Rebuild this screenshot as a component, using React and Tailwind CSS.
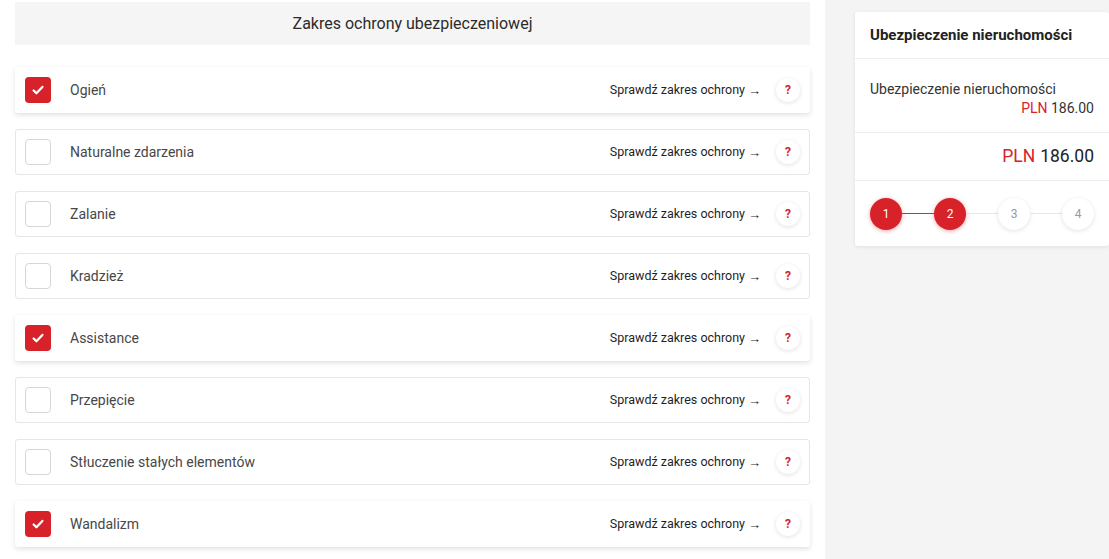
import React from 'react';

const items = [
    { label: 'Ogień', checked: true },
    { label: 'Naturalne zdarzenia', checked: false },
    { label: 'Zalanie', checked: false },
    { label: 'Kradzież', checked: false },
    { label: 'Assistance', checked: true },
    { label: 'Przepięcie', checked: false },
    { label: 'Stłuczenie stałych elementów', checked: false },
    { label: 'Wandalizm', checked: true },
];

function Check() {
    return (
        <svg viewBox="0 0 16 16" className="w-[14px] h-[14px]" fill="none">
            <path d="M3 8.5l3.2 3.2L13 4.5" stroke="white" strokeWidth="2.6" strokeLinecap="round" strokeLinejoin="round" />
        </svg>
    );
}

function Row({ label, checked }) {
    return (
        <div
            className={
                'h-[46px] flex items-center bg-white rounded-[3px] ' +
                (checked
                    ? 'pl-[10px] pr-[10px] shadow-[0_2px_5px_rgba(0,0,0,0.12)]'
                    : 'pl-[9px] pr-[9px] border border-[#e6e6e6]')
            }
        >
            <div
                className={
                    'w-[26px] h-[26px] rounded-[4px] flex items-center justify-center shrink-0 ' +
                    (checked ? 'bg-[#d7222a]' : 'border border-[#d6d6d6] bg-white')
                }
            >
                {checked && <Check />}
            </div>
            <span className="ml-[19px] text-[14px] text-[#474747]">{label}</span>
            <span className="ml-auto text-[12.5px] text-[#1f1f1f] flex items-center">
                Sprawdź zakres ochrony
                <span className="ml-[3px] text-[13px] leading-none">→</span>
            </span>
            <div className="ml-[15px] w-[24px] h-[24px] rounded-full bg-white shadow-[0_1px_4px_rgba(0,0,0,0.12)] flex items-center justify-center text-[12px] font-bold text-[#d7222a]">
                ?
            </div>
        </div>
    );
}

function Step({ n, active }) {
    return (
        <div
            className={
                'w-[32px] h-[32px] rounded-full flex items-center justify-center text-[12px] shrink-0 ' +
                (active
                    ? 'bg-[#d7222a] text-white shadow-[0_1px_4px_rgba(215,34,42,0.4)]'
                    : 'bg-white text-[#9a9a9a] shadow-[0_1px_4px_rgba(0,0,0,0.12)]')
            }
        >
            {n}
        </div>
    );
}

export default function App() {
    return (
        <div className="flex w-[1109px] h-[559px] overflow-hidden bg-[#f5f4f4]" style={{ fontFamily: 'Roboto, "Liberation Sans", sans-serif' }}>
            <div className="w-[825px] bg-white px-[15px] pt-[2px] shrink-0">
                <div className="h-[43px] bg-[#f6f5f5] flex items-center justify-center text-[16px] text-[#2b2b2b]">
                    Zakres ochrony ubezpieczeniowej
                </div>
                <div className="mt-[22px] flex flex-col gap-[16px]">
                    {items.map((it) => (
                        <Row key={it.label} {...it} />
                    ))}
                </div>
            </div>
            <div className="flex-1 pl-[30px] pt-[12px]">
                <div className="bg-white rounded-[3px] shadow-[0_1px_4px_rgba(0,0,0,0.08)]">
                    <div className="h-[47px] flex items-center px-[15px] border-b border-[#ececec] text-[15px] font-bold text-[#222]">
                        Ubezpieczenie nieruchomości
                    </div>
                    <div className="h-[74px] px-[15px] pt-[4px] border-b border-[#ececec] flex flex-col justify-center text-[14px] text-[#333]">
                        <div>Ubezpieczenie nieruchomości</div>
                        <div className="text-right leading-[16px]">
                            <span className="text-[#d7222a]">PLN</span> 186.00
                        </div>
                    </div>
                    <div className="h-[48px] px-[15px] border-b border-[#ececec] flex items-center justify-end text-[17.5px] text-[#222]">
                        <span className="text-[#d7222a] mr-[5px]">PLN</span>186.00
                    </div>
                    <div className="h-[65px] px-[15px] flex items-center">
                        <Step n={1} active />
                        <div className="flex-1 h-[1px] bg-[#e0262e]" />
                        <Step n={2} active />
                        <div className="flex-1 h-[1px] bg-[#e6e6e6]" />
                        <Step n={3} />
                        <div className="flex-1 h-[1px] bg-[#e6e6e6]" />
                        <Step n={4} />
                    </div>
                </div>
            </div>
        </div>
    );
}
